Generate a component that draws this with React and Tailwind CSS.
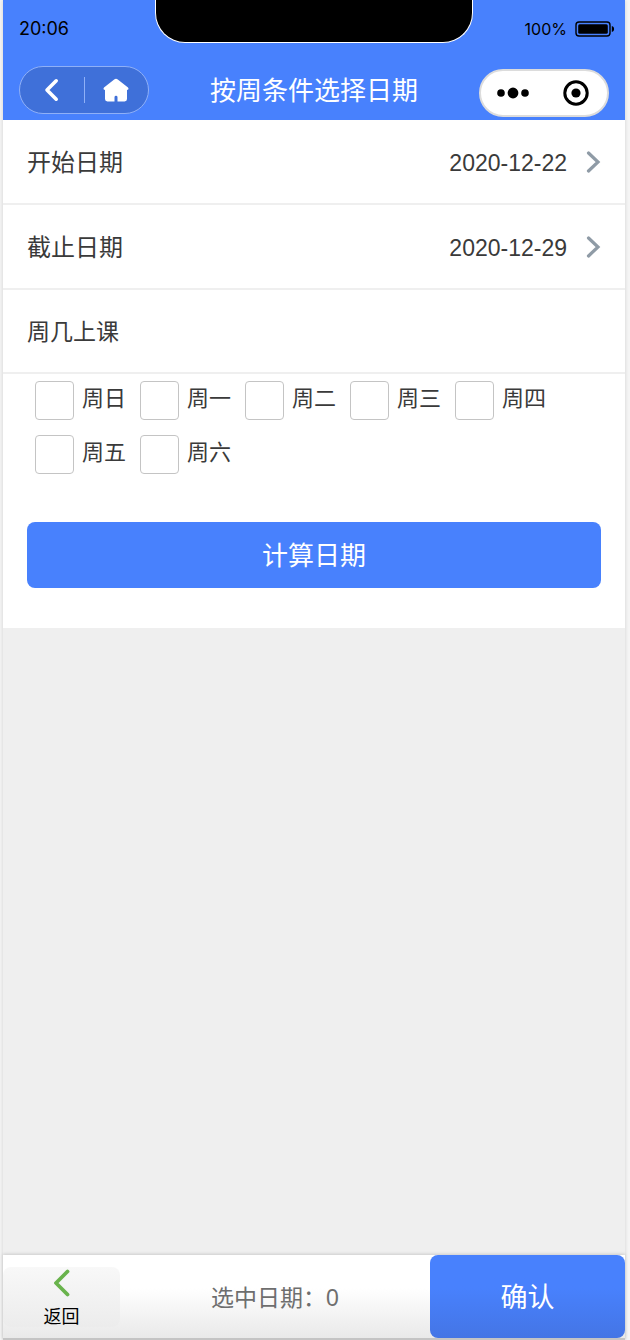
import { useState } from 'react';

const WEEKDAYS = ['周日', '周一', '周二', '周三', '周四', '周五', '周六'];

function StatusBar() {
  return (
    <div className="grid h-15 grid-cols-[1fr_51%_1fr] items-center pb-[2px] font-['Inter',sans-serif] text-black">
      <div className="pl-4 text-lg leading-6">20:06</div>
      <div className="h-[43px] self-start rounded-b-[30px] border border-t-0 border-white bg-black" />
      <div className="flex items-center justify-end gap-2 pr-[10px]">
        <span className="text-base leading-6">100%</span>
        <svg className="h-4 w-10" viewBox="0 0 40 16" aria-hidden="true">
          <rect x="1" y="1" width="34" height="14" rx="3" fill="none" stroke="#000" strokeWidth="1.4" />
          <rect x="3.2" y="3.2" width="29.6" height="9.6" rx="1.5" fill="#000" />
          <path d="M36.8 5c3 .6 3 5.4 0 6z" fill="#000" />
        </svg>
      </div>
    </div>
  );
}

function NavBar() {
  return (
    <div className="flex h-15 items-center px-4">
      <div className="flex-1">
        <div className="flex h-12 w-[130px] items-center rounded-full border border-[#8fb0f7] bg-[#3f70d9]">
          <button type="button" aria-label="返回" className="flex h-full flex-1 items-center justify-center">
            <svg className="h-6 w-4" viewBox="0 0 16 24" fill="none" aria-hidden="true">
              <path d="M12.2 2.8L3 12l9.2 9.2" stroke="#fff" strokeWidth="3.6" strokeLinecap="round" strokeLinejoin="round" />
            </svg>
          </button>
          <div className="h-[26px] w-px bg-[#8fb0f7]" />
          <button type="button" aria-label="首页" className="flex h-full flex-1 items-center justify-center">
            <svg className="h-6 w-[26px]" viewBox="0 0 26 24" aria-hidden="true">
              <path
                d="M11.2 1.5Q13 .2 14.8 1.5L25 9.4Q26 10.6 25.2 11.6Q24.8 12 24 12V21Q24 23.4 21.6 23.4H14.5V19.2Q14.5 17.8 13 17.8T11.5 19.2V23.4H4.4Q2 23.4 2 21V12Q1.2 12 .8 11.6Q0 10.6 1 9.4Z"
                fill="#fff"
              />
            </svg>
          </button>
        </div>
      </div>
      <h1 className="pt-[2px] text-[26px] leading-8 text-white">按周条件选择日期</h1>
      <div className="flex flex-1 justify-end self-end pb-[3px]">
        <div className="flex h-12 w-[130px] items-center rounded-full border-2 border-[#dcdcdc] bg-white">
          <button type="button" aria-label="更多" className="flex h-full flex-1 items-center justify-center">
            <svg className="h-3 w-8" viewBox="0 0 32 12" aria-hidden="true">
              <circle cx="4" cy="6" r="3.8" />
              <circle cx="16" cy="6" r="5.4" />
              <circle cx="28" cy="6" r="3.8" />
            </svg>
          </button>
          <button type="button" aria-label="关闭" className="flex h-full flex-1 items-center justify-center">
            <svg className="h-[26px] w-[26px]" viewBox="0 0 26 26" aria-hidden="true">
              <circle cx="13" cy="13" r="11.2" fill="none" stroke="#000" strokeWidth="3" />
              <circle cx="13" cy="13" r="4.6" />
            </svg>
          </button>
        </div>
      </div>
    </div>
  );
}

function DateRow({ label, value }) {
  return (
    <button type="button" className="flex h-[85px] w-full items-center justify-between border-b-2 border-[#efefef] px-6 pt-[2px]">
      <span className="text-2xl leading-8">{label}</span>
      <span className="flex items-center gap-[18px]">
        <span className="text-[23px] leading-8">{value}</span>
        <svg className="h-6 w-4" viewBox="0 0 16 24" fill="none" aria-hidden="true">
          <path d="M3.5 2l9.500 9-9.500 9" stroke="#8f9ba6" strokeWidth="3.2" strokeLinecap="round" strokeLinejoin="miter" />
        </svg>
      </span>
    </button>
  );
}

export default function App() {
  const [checked, setChecked] = useState([]);

  const toggle = (day) => {
    setChecked(checked.includes(day) ? checked.filter((d) => d !== day) : [...checked, day]);
  };

  return (
    <div className="min-h-screen bg-[#f5f5f5] pr-[5px] pl-[3px] font-['Liberation_Sans','Noto_Sans_CJK_SC',sans-serif] text-[#3a3a3a]">
      <div className="flex min-h-screen flex-col bg-[#efefef] shadow-[0_0_4px_rgba(0,0,0,0.15)]">
        <header className="bg-[#4881fd]">
          <StatusBar />
          <NavBar />
        </header>

        <main className="flex-1">
          <form className="bg-white pb-10" onSubmit={(e) => e.preventDefault()}>
            <DateRow label="开始日期" value="2020-12-22" />
            <DateRow label="截止日期" value="2020-12-29" />
            <fieldset>
              <legend className="flex h-[84px] w-full items-center border-b-2 border-[#efefef] px-6 pt-[2px] text-[23px] leading-8">
                周几上课
              </legend>
              <div className="flex flex-wrap gap-x-[14px] gap-y-[15px] pt-[7px] pl-8">
                {WEEKDAYS.map((day) => (
                  <label key={day} className="flex items-start gap-2 text-[22px] leading-9">
                    <input
                      type="checkbox"
                      checked={checked.includes(day)}
                      onChange={() => toggle(day)}
                      className="h-[39px] w-[39px] appearance-none rounded-sm border border-[#c4c4c4] bg-white checked:bg-[#4881fd]"
                    />
                    {day}
                  </label>
                ))}
              </div>
            </fieldset>
            <div className="px-6 pt-12">
              <button type="submit" className="h-[66px] w-full rounded-lg bg-[#4881fd] pt-[2px] text-[26px] leading-8 text-white">
                计算日期
              </button>
            </div>
          </form>
        </main>

        <footer className="flex h-[85px] items-center border-b-2 border-[#c4c4c4] bg-linear-to-b from-white from-40% to-[#e9e9e9] shadow-[0_-1px_3px_rgba(0,0,0,0.15)]">
          <button
            type="button"
            className="flex h-[60px] w-[117px] flex-col items-center justify-between rounded-lg bg-linear-to-b from-[#f8f8f8] to-[#ececec] pt-[2px] text-lg leading-5 text-black"
          >
            <svg className="h-7 w-4" viewBox="0 0 16 28" fill="none" aria-hidden="true">
              <path d="M13.5 2.5L2 14l11.5 11.5" stroke="#69b34c" strokeWidth="3.8" strokeLinecap="round" strokeLinejoin="round" />
            </svg>
            返回
          </button>
          <p className="flex-1 pt-[2px] text-center text-[23px] leading-8 text-[#6e6e6e]">选中日期：0</p>
          <button
            type="button"
            className="h-full w-[195px] rounded-lg bg-linear-to-b from-[#4881fd] from-40% to-[#4475e5] pt-[2px] text-[27px] leading-8 text-white"
          >
            确认
          </button>
        </footer>
      </div>
    </div>
  );
}
